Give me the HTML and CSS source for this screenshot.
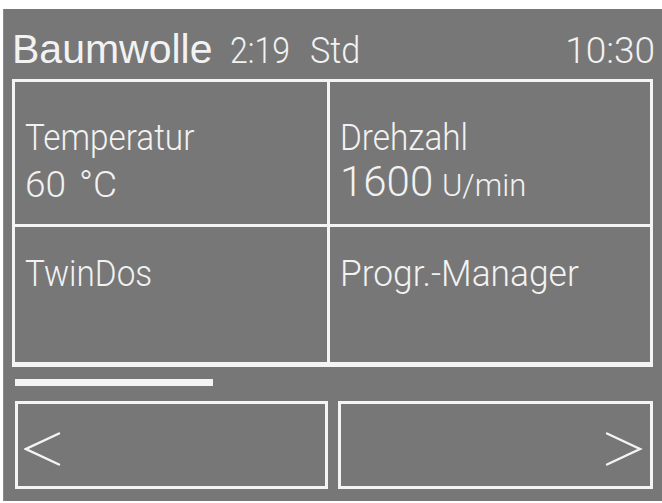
FILE: index.html
```html
<!DOCTYPE html>
<html lang="de">
<head>
<meta charset="utf-8">
<title>Baumwolle</title>
<link rel="stylesheet" href="styles.css">
</head>
<body>
<div class="panel">
  <header class="header">
    <span class="title">Baumwolle</span>
    <span class="dur">2:19</span>
    <span class="std">Std</span>
    <span class="clock">10:30</span>
  </header>
  <div class="grid">
    <div class="cell cell-top">
      <div class="label">Temperatur</div>
      <div class="value value-temp">60 °C</div>
    </div>
    <div class="cell cell-top cell-right">
      <div class="label">Drehzahl</div>
      <div class="value"><span class="big">1600</span> <span class="small">U/min</span></div>
    </div>
    <div class="cell cell-bottom">
      <div class="label">TwinDos</div>
    </div>
    <div class="cell cell-bottom cell-right">
      <div class="label label-wide">Progr.-Manager</div>
    </div>
  </div>
  <div class="progress"></div>
  <div class="nav">
    <div class="btn btn-left">
      <svg class="chev" width="40" height="40" viewBox="0 0 40 40"><polyline points="35,4.5 2,20 35,35.5" fill="none" stroke="#f4f4f4" stroke-width="2.4" stroke-linecap="round" stroke-linejoin="miter"/></svg>
    </div>
    <div class="btn btn-right">
      <svg class="chev" width="40" height="40" viewBox="0 0 40 40"><polyline points="4,4.5 37,20 4,35.5" fill="none" stroke="#f4f4f4" stroke-width="2.4" stroke-linecap="round" stroke-linejoin="miter"/></svg>
    </div>
  </div>
</div>
</body>
</html>
```

FILE: styles.css
```css
html, body {
  margin: 0;
  padding: 0;
  background: #ffffff;
}

body {
  font-family: "Liberation Sans", Arial, sans-serif;
  color: #f2f2f2;
}

.panel {
  margin: 9px 0 0 3px;
  width: 659px;
  height: 492px;
  box-sizing: border-box;
  padding: 0 9px 0 9px;
  background: #777777;
  box-shadow: inset 1px 0 0 #8a8a8a;
  overflow: hidden;
}

.header {
  display: flex;
  align-items: baseline;
  height: 70px;
  box-sizing: border-box;
  padding-top: 20px;
  line-height: 1;
  white-space: nowrap;
}

.title {
  font-family: "Liberation Sans", Arial, sans-serif;
  font-size: 41px;
}

.dur,
.std,
.clock,
.label,
.value {
  font-family: Roboto, "Liberation Sans", sans-serif;
  font-weight: 300;
}

.dur {
  font-size: 36px;
  margin-left: 17px;
  display: inline-block;
  transform: scaleX(0.89);
  transform-origin: left center;
}

.std {
  font-size: 36px;
  margin-left: 13px;
  display: inline-block;
  transform: scaleX(0.95);
  transform-origin: left center;
}

.clock {
  font-size: 37px;
  margin-left: auto;
  margin-right: -2px;
}

.grid {
  display: grid;
  grid-template-columns: 312px 320px;
  grid-template-rows: 142px 135px;
  gap: 3px;
  padding: 3px 3px 5px 3px;
  width: 641px;
  box-sizing: border-box;
  background: #f4f4f4;
}

.cell {
  background: #777777;
  padding-left: 10px;
  line-height: 47px;
  white-space: nowrap;
}

.cell-top {
  padding-top: 32px;
}

.cell-bottom {
  padding-top: 23px;
}

.label {
  font-size: 37px;
  transform: scaleX(0.9);
  transform-origin: left center;
}

.label-wide {
  transform: scaleX(0.955);
}

.value {
  font-size: 36px;
}

.value-temp {
  font-size: 37px;
  word-spacing: 4px;
}

.big {
  font-size: 42px;
  line-height: 1;
}

.small {
  font-size: 31px;
  line-height: 1;
}

.progress {
  margin: 12px 0 0 3px;
  width: 198px;
  height: 7px;
  background: #f4f4f4;
}

.nav {
  display: flex;
  gap: 10px;
  margin: 15px 0 0 3px;
}

.btn {
  height: 88px;
  box-sizing: border-box;
  border: 3px solid #f4f4f4;
  display: flex;
  align-items: center;
  padding-top: 8px;
}

.btn-left {
  width: 313px;
  padding-left: 6px;
}

.btn-right {
  width: 316px;
  justify-content: flex-end;
  padding-right: 7px;
}

.chev {
  display: block;
}
```
